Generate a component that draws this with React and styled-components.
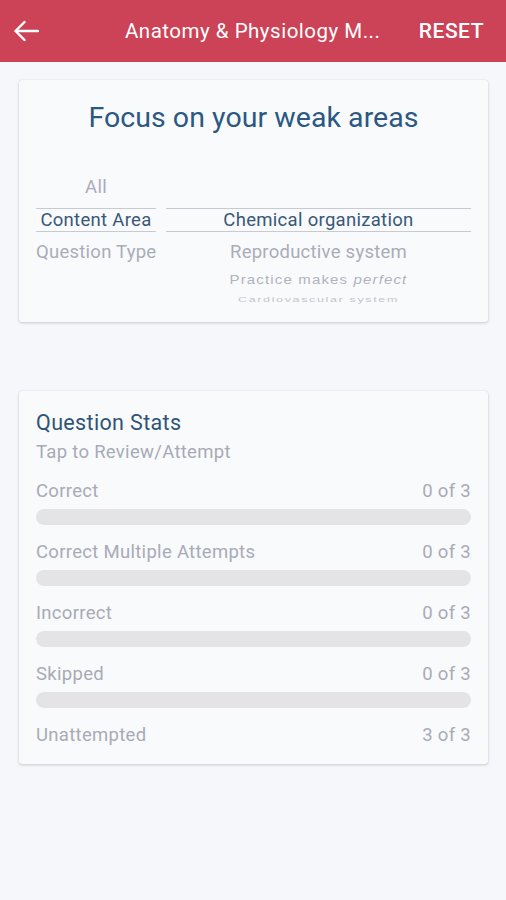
import React from "react";
import styled, { createGlobalStyle } from "styled-components";

const Global = createGlobalStyle`
  html, body { margin: 0; padding: 0; background: #f6f7fb; }
  body { font-family: Roboto, "Noto Sans", Arial, sans-serif; }
  * { box-sizing: border-box; }
`;

const Page = styled.div`
  width: 506px;
  min-height: 900px;
  background: #f6f7fb;
`;

const Header = styled.header`
  height: 62px;
  background: #cc4256;
  display: flex;
  align-items: center;
  padding: 0 22px 0 13px;
  color: #fff;
`;

const BackBtn = styled.div`
  width: 27px;
  height: 24px;
  display: flex;
  align-items: center;
`;

const Title = styled.div`
  flex: 1;
  padding-left: 85px;
  font-size: 20.5px;
  white-space: nowrap;
  letter-spacing: 0.5px;
`;

const Reset = styled.div`
  font-size: 21px;
  font-weight: 500;
  letter-spacing: 0.5px;
`;

const Content = styled.main`
  padding: 18px 18px 0 19px;
  display: flex;
  flex-direction: column;
  gap: 69px;
`;

const Card = styled.section`
  background: #f9fafc;
  border-radius: 3px;
  box-shadow: 0 1px 3px rgba(0, 0, 0, 0.18), 0 0 1px rgba(0, 0, 0, 0.12);
  padding: ${(p) => p.$pad};
`;

const FocusTitle = styled.h2`
  margin: 0;
  font-size: 28.5px;
  font-weight: 400;
  line-height: 36px;
  letter-spacing: 0.05px;
  text-align: center;
  color: #2b5882;
`;

const PickerWrap = styled.div`
  margin-top: 36px;
  display: grid;
  grid-template-columns: 120px 305px;
  column-gap: 10px;
  height: 134px;
  overflow: hidden;
`;

const Column = styled.div`
  display: flex;
  flex-direction: column;
  align-items: center;
`;

const Item = styled.div`
  width: 100%;
  height: 30px;
  line-height: 30px;
  text-align: center;
  font-size: 18.5px;
  letter-spacing: 0.25px;
  color: #aaadb8;
  white-space: nowrap;
`;

const SelectedItem = styled.div`
  width: 100%;
  height: 24px;
  line-height: 22px;
  margin: 6px 0 5px;
  border-top: 1px solid #c7cad2;
  border-bottom: 1px solid #c7cad2;
  text-align: center;
  font-size: 18.5px;
  letter-spacing: 0.3px;
  color: #385879;
  white-space: nowrap;
`;

const FarItem = styled.div`
  width: 100%;
  height: ${(p) => p.$h}px;
  line-height: ${(p) => p.$h}px;
  text-align: center;
  font-family: "Liberation Sans", Arial, sans-serif;
  font-size: ${(p) => p.$size}px;
  letter-spacing: ${(p) => p.$ls}px;
  color: ${(p) => p.$color};
  white-space: nowrap;
  transform: scaleY(${(p) => p.$sy});
  & em { font-style: italic; }
`;

const StatsTitle = styled.h3`
  margin: 0;
  font-size: 21.5px;
  font-weight: 400;
  line-height: 26px;
  letter-spacing: 0.35px;
  color: #2f5478;
`;

const Sub = styled.div`
  margin-top: 4px;
  font-size: 18.5px;
  line-height: 24px;
  letter-spacing: 0.3px;
  color: #a8abb6;
`;

const StatList = styled.div`
  margin-top: 15px;
  display: flex;
  flex-direction: column;
  gap: 15px;
`;

const Stat = styled.div`
  display: flex;
  flex-direction: column;
  gap: 6px;
`;

const StatHead = styled.div`
  display: flex;
  justify-content: space-between;
  font-size: 18.5px;
  line-height: 24px;
  letter-spacing: 0.3px;
  color: #a8abb6;
`;

const Track = styled.div`
  height: 16px;
  border-radius: 8px;
  background: #e4e4e7;
  overflow: hidden;
`;

const Fill = styled.div`
  height: 100%;
  background: #cc4256;
`;

const stats = [
  { label: "Correct", n: 0, bar: true },
  { label: "Correct Multiple Attempts", n: 0, bar: true },
  { label: "Incorrect", n: 0, bar: true },
  { label: "Skipped", n: 0, bar: true },
  { label: "Unattempted", n: 3, bar: false },
];

export default function App() {
  return (
    <Page>
      <Global />
      <Header>
        <BackBtn>
          <svg width="26" height="22" viewBox="0 0 26 22" fill="none">
            <path
              d="M25 11H2.5M11.5 2L2.5 11L11.5 20"
              stroke="#fff"
              strokeWidth="2.4"
              strokeLinecap="round"
              strokeLinejoin="round"
            />
          </svg>
        </BackBtn>
        <Title>Anatomy &amp; Physiology M...</Title>
        <Reset>RESET</Reset>
      </Header>
      <Content>
        <Card $pad="20px 17px 16px 17px">
          <FocusTitle>Focus on your weak areas</FocusTitle>
          <PickerWrap>
            <Column>
              <Item>All</Item>
              <SelectedItem>Content Area</SelectedItem>
              <Item>Question Type</Item>
            </Column>
            <Column>
              <Item />
              <SelectedItem>Chemical organization</SelectedItem>
              <Item>Reproductive system</Item>
              <FarItem $h={26} $size={15} $ls={1.15} $sy={0.9} $color="#b0b3bc">
                Practice makes <em>perfect</em>
              </FarItem>
              <FarItem $h={14} $size={12.5} $ls={1.65} $sy={0.55} $color="#c3c5cc">
                Cardiovascular system
              </FarItem>
            </Column>
          </PickerWrap>
        </Card>
        <Card $pad="19px 17px 17px 17px">
          <StatsTitle>Question Stats</StatsTitle>
          <Sub>Tap to Review/Attempt</Sub>
          <StatList>
            {stats.map((s) => (
              <Stat key={s.label}>
                <StatHead>
                  <span>{s.label}</span>
                  <span>{s.n} of 3</span>
                </StatHead>
                {s.bar && (
                  <Track>
                    <Fill style={{ width: `${(s.n / 3) * 100}%` }} />
                  </Track>
                )}
              </Stat>
            ))}
          </StatList>
        </Card>
      </Content>
    </Page>
  );
}
